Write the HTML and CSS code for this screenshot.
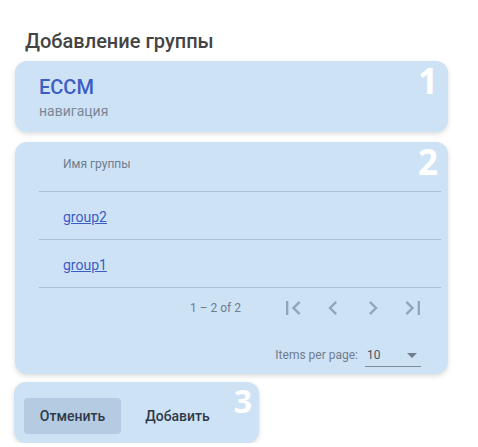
FILE: index.html
```html
<!DOCTYPE html>
<html lang="ru">
<head>
    <meta charset="UTF-8">
    <meta name="viewport" content="width=device-width, initial-scale=1.0">
    <title>Добавление группы</title>
    <link rel="stylesheet" href="styles.css">
</head>
<body>
    <div class="page">
        <h2 class="page-title">Добавление группы</h2>

        <div class="card step-card">
            <div class="step-number">1</div>
            <div class="app-name">ECCM</div>
            <div class="app-sub">навигация</div>
        </div>

        <div class="card table-card">
            <div class="step-number">2</div>
            <div class="group-table">
                <div class="table-row header-row">
                    <div class="cell">Имя группы</div>
                </div>
                <div class="table-row">
                    <div class="cell"><a href="#">group2</a></div>
                </div>
                <div class="table-row">
                    <div class="cell"><a href="#">group1</a></div>
                </div>
            </div>

            <div class="paginator">
                <div class="range-row">
                    <div class="range-label">1 – 2 of 2</div>
                    <button class="icon-btn" disabled>
                        <svg viewBox="0 0 24 24" width="28" height="28"><path d="M18.41 16.59L13.82 12l4.59-4.59L17 6l-6 6 6 6zM6 6h2v12H6z"/></svg>
                    </button>
                    <button class="icon-btn" disabled>
                        <svg viewBox="0 0 24 24" width="28" height="28"><path d="M15.41 7.41L14 6l-6 6 6 6 1.41-1.41L10.83 12z"/></svg>
                    </button>
                    <button class="icon-btn" disabled>
                        <svg viewBox="0 0 24 24" width="28" height="28"><path d="M10 6L8.59 7.41 13.17 12l-4.58 4.59L10 18l6-6z"/></svg>
                    </button>
                    <button class="icon-btn" disabled>
                        <svg viewBox="0 0 24 24" width="28" height="28"><path d="M5.59 7.41L10.18 12l-4.59 4.59L7 18l6-6-6-6zM16 6h2v12h-2z"/></svg>
                    </button>
                </div>
                <div class="size-row">
                    <div class="size-label">Items per page:</div>
                    <div class="size-select">
                        <span class="size-value">10</span>
                        <span class="select-arrow"></span>
                    </div>
                </div>
            </div>
        </div>

        <div class="card actions-card">
            <div class="step-number small">3</div>
            <button class="btn btn-cancel">Отменить</button>
            <button class="btn">Добавить</button>
        </div>
    </div>
</body>
</html>
```

FILE: styles.css
```css
body {
    margin: 0;
    font-family: Roboto, "Noto Sans", sans-serif;
    background-color: #fff;
}

.page {
    width: 433px;
    margin-left: 15px;
    padding-top: 29px;
}

.page-title {
    margin: 0 0 8px 0;
    padding-left: 10px;
    font-size: 20px;
    line-height: 24px;
    font-weight: 500;
    color: #444;
}

.card {
    position: relative;
    background-color: #cee2f6;
    border-radius: 12px;
    box-shadow: 0 2px 5px rgba(0, 0, 0, 0.14);
}

.step-number {
    position: absolute;
    top: 2px;
    right: 10px;
    font-family: "Open Sans", sans-serif;
    font-weight: 700;
    font-size: 35px;
    line-height: 1;
    color: #fff;
}

.step-number.small {
    top: 3px;
    right: 7px;
    font-size: 32px;
}

/* step 1 */
.step-card {
    padding: 14px 24px 11px 24px;
}

.app-name {
    font-size: 20px;
    line-height: 24px;
    font-weight: 500;
    color: #3c5dc3;
}

.app-sub {
    margin-top: 2px;
    font-size: 14px;
    line-height: 20px;
    color: #7a8796;
}

/* step 2 */
.table-card {
    margin-top: 10px;
    padding: 0 7px 0 24px;
}

.table-row {
    display: flex;
    align-items: center;
    height: 48px;
    border-bottom: 1px solid #aac1da;
    padding-top: 3px;
    box-sizing: border-box;
}

.header-row {
    height: 50px;
    align-items: flex-start;
    padding-top: 14px;
}

.cell {
    padding-left: 24px;
    font-size: 14px;
    line-height: 20px;
}

.header-row .cell {
    font-size: 12px;
    line-height: 16px;
    color: #6f7d8c;
}

.cell a {
    color: #3c5dc3;
}

.paginator {
    padding-right: 8px;
    font-size: 12px;
    color: #6f7d8c;
}

.range-row {
    display: flex;
    justify-content: flex-end;
    align-items: center;
    height: 40px;
}

.range-label {
    margin-right: 32px;
    line-height: 16px;
}

.icon-btn {
    width: 40px;
    height: 40px;
    padding: 0;
    border: none;
    background: none;
    display: flex;
    align-items: center;
    justify-content: center;
}

.icon-btn svg {
    fill: #91a5bb;
}

.size-row {
    display: flex;
    justify-content: flex-end;
    align-items: flex-start;
    padding: 19px 8px 7px 0;
}

.size-label {
    line-height: 16px;
    margin-right: 7px;
}

.size-select {
    display: flex;
    align-items: center;
    justify-content: space-between;
    width: 56px;
    margin-right: 4px;
    padding: 0 4px 3px 2px;
    box-sizing: border-box;
    border-bottom: 1px solid #7d8c9c;
}

.size-value {
    line-height: 16px;
    color: #4a5563;
}

.select-arrow {
    width: 0;
    height: 0;
    border-left: 5px solid transparent;
    border-right: 5px solid transparent;
    border-top: 5px solid #6e7d8f;
}

/* step 3 */
.actions-card {
    display: inline-flex;
    gap: 8px;
    margin-top: 8px;
    margin-left: -1px;
    padding: 16px 33px 9px 10px;
}

.btn {
    width: 97px;
    height: 36px;
    border: none;
    border-radius: 4px;
    background: none;
    font-family: Roboto, sans-serif;
    font-size: 14px;
    font-weight: 500;
    color: #2e3a48;
    cursor: pointer;
}

.btn-cancel {
    background-color: #b4cbe2;
}
```
